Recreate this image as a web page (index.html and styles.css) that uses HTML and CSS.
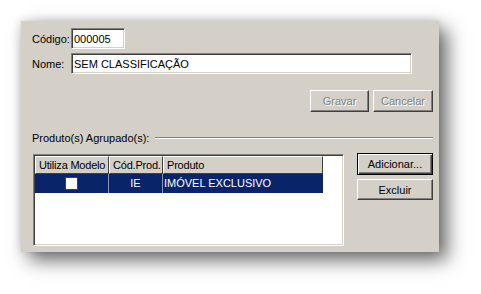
FILE: index.html
```html
<html>

<head>
    <title>Grupo de Produtos</title>
    <link rel="stylesheet" href="styles.css">
</head>

<body>
    <div class="form">
        <div class="row">
            <span class="lbl">Código:</span>
            <input class="edit cod" type="text" value="000005" />
        </div>
        <div class="row row2">
            <span class="lbl">Nome:</span>
            <input class="edit nome" type="text" value="SEM CLASSIFICAÇÃO" />
        </div>
        <div class="acoes">
            <button class="btn gravar" disabled>Gravar</button>
            <button class="btn cancelar" disabled>Cancelar</button>
        </div>
        <div class="sep">
            <span>Produto(s) Agrupado(s):</span>
            <div class="linha"></div>
        </div>
        <div class="area">
            <div class="grid">
                <div class="cab">
                    <div class="c1">Utiliza Modelo</div>
                    <div class="c2">Cód.Prod.</div>
                    <div class="c3">Produto</div>
                </div>
                <div class="reg sel">
                    <div class="c1"><span class="chk"></span></div>
                    <div class="c2">IE</div>
                    <div class="c3">IMÓVEL EXCLUSIVO</div>
                </div>
            </div>
            <div class="lado">
                <button class="btn padrao">Adicionar...</button>
                <button class="btn excluir">Excluir</button>
            </div>
        </div>
    </div>
</body>

</html>
```

FILE: styles.css
```css
body {
    margin: 0;
    background: #ffffff;
    font-family: "Liberation Sans", Arial, sans-serif;
    font-size: 11px;
    color: #000;
}

.form {
    margin: 21px 0 0 21px;
    width: 418px;
    height: 231px;
    box-sizing: border-box;
    padding: 7px 6px 0 11px;
    background: #d4d0c8;
    /*sombra da janela*/
    box-shadow: 8px 8px 18px rgba(0, 0, 0, .6), -1px -1px 8px rgba(0, 0, 0, .12);
}

.row {
    display: flex;
    align-items: center;
    height: 21px;
}

.row2 {
    margin-top: 4px;
}

.lbl {
    width: 39px;
}

.edit {
    height: 21px;
    box-sizing: border-box;
    margin: 0;
    padding: 1px 2px 0 2px;
    font-family: "Liberation Sans", Arial, sans-serif;
    font-size: 11px;
    color: #000;
    background: #fff;
    border-top: 1px solid #808080;
    border-left: 1px solid #808080;
    border-right: 1px solid #fff;
    border-bottom: 1px solid #fff;
    box-shadow: inset 1px 1px 0 #404040, inset -1px -1px 0 #d4d0c8;
    outline: none;
}

.cod {
    width: 54px;
}

.nome {
    width: 341px;
}

.acoes {
    display: flex;
    justify-content: flex-end;
    gap: 4px;
    margin-top: 16px;
}

.btn {
    height: 22px;
    margin: 0;
    padding: 0;
    font-family: "Liberation Sans", Arial, sans-serif;
    font-size: 11px;
    color: #000;
    background: #d4d0c8;
    border-top: 1px solid #fff;
    border-left: 1px solid #fff;
    border-right: 1px solid #404040;
    border-bottom: 1px solid #404040;
    box-shadow: inset -1px -1px 0 #808080;
    box-sizing: border-box;
}

.btn:disabled {
    color: #808080;
    text-shadow: 1px 1px 0 #fff;
}

.gravar {
    width: 59px;
}

.cancelar {
    width: 60px;
}

.sep {
    display: flex;
    align-items: center;
    height: 14px;
    margin-top: 19px;
}

.linha {
    flex: 1;
    margin-left: 6px;
    border-top: 1px solid #808080;
    border-bottom: 1px solid #fff;
}

.area {
    display: flex;
    margin-top: 9px;
}

.grid {
    width: 311px;
    height: 92px;
    margin-left: 1px;
    box-sizing: border-box;
    background: #fff;
    border-top: 1px solid #808080;
    border-left: 1px solid #808080;
    border-right: 1px solid #fff;
    border-bottom: 1px solid #fff;
    box-shadow: inset 1px 1px 0 #404040, inset -1px -1px 0 #d4d0c8;
    padding: 1px 0 0 1px;
}

.cab,
.reg {
    display: flex;
    width: 288px;
}

.cab div {
    height: 18px;
    line-height: 17px;
    box-sizing: border-box;
    background: #d4d0c8;
    border-top: 1px solid #fff;
    border-left: 1px solid #fff;
    border-right: 1px solid #404040;
    border-bottom: 1px solid #404040;
    padding-left: 3px;
    white-space: nowrap;
    letter-spacing: -0.2px;
}

.c1 {
    width: 74px;
}

.c2 {
    width: 54px;
}

.c3 {
    width: 160px;
}

.reg div {
    height: 19px;
    line-height: 19px;
    box-sizing: border-box;
    white-space: nowrap;
}

.sel {
    background: #0a246a;
    color: #fff;
}

.reg .c1,
.reg .c2 {
    border-right: 1px solid #8a94b8;
    text-align: center;
}

.reg .c3 {
    padding-left: 1px;
}

.chk {
    display: inline-block;
    width: 13px;
    height: 13px;
    box-sizing: border-box;
    margin-top: 3px;
    vertical-align: top;
    background: #fff;
    border: 1px solid #404040;
}

.lado {
    display: flex;
    flex-direction: column;
    gap: 4px;
    margin-left: 13px;
    margin-top: -1px;
}

.lado .btn {
    width: 76px;
}

.padrao {
    border: 1px solid #000;
    box-shadow: inset 1px 1px 0 #fff, inset -1px -1px 0 #404040, inset -2px -2px 0 #808080;
}

.excluir {
    height: 21px;
}
```
